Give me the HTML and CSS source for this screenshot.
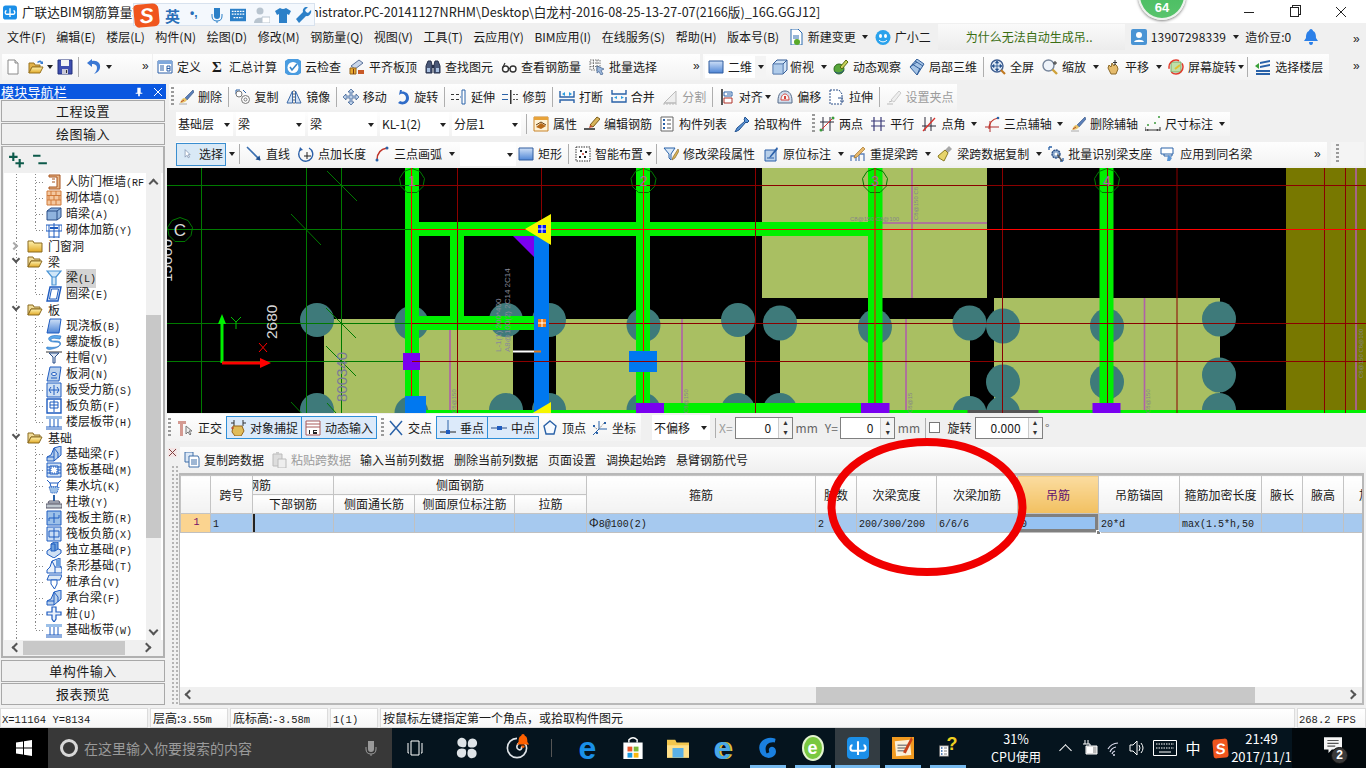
FILE: index.html
```html
<!DOCTYPE html>
<html lang="zh">
<head>
<meta charset="utf-8">
<title>广联达BIM钢筋算量</title>
<link rel="stylesheet" href="styles.css">
</head>
<body>
<svg class="defs" aria-hidden="true">
<defs>
<linearGradient id="gb" x1="0" y1="0" x2="0" y2="1"><stop offset="0" stop-color="#cfe0f7"/><stop offset="1" stop-color="#4f86d6"/></linearGradient>
<linearGradient id="gy" x1="0" y1="0" x2="0" y2="1"><stop offset="0" stop-color="#fff3b0"/><stop offset="1" stop-color="#e0a826"/></linearGradient>
<path id="axc" d="M0-12.500 8-9.500 12.500-2.500 11 5.500 5 11.500-5 11.500-11 5.500-12.500-2.500-8-9.500z"/>
<symbol id="new" viewBox="0 0 16 16"><path d="M3 1h7l3 3v11H3z" fill="#fff" stroke="#8a8a8a"/><path d="M10 1v3h3" fill="#ddd" stroke="#8a8a8a"/></symbol>
<symbol id="open" viewBox="0 0 16 16"><path d="M1 4h5l1 2h5v2H4L1 14z" fill="#e3b34a" stroke="#9a7420"/><path d="M4 8h11l-3 6H1z" fill="url(#gy)" stroke="#9a7420"/><path d="M9 3c2-2 4-2 5 0l1-1v3h-3l1-1c-1-1-2-1-3 0z" fill="#3a7dd0"/></symbol>
<symbol id="save" viewBox="0 0 16 16"><path d="M1 1h14v14H1z" fill="#3f4fb0" stroke="#23307a"/><path d="M4 1h8v6H4z" fill="#f4f4f4"/><path d="M5 10h6v5H5z" fill="#c9c9d8"/><path d="M9 11h1v3H9z" fill="#333"/></symbol>
<symbol id="undo" viewBox="0 0 16 16"><path d="M5 2c5-1 9 2 8 7-.5 3-3 5-6 6 2-2 3-4 3-6 0-3-2-4-5-4v3L0 4l5-4z" fill="#3b78d4"/></symbol>
<symbol id="def" viewBox="0 0 16 16"><path d="M1 2h14v12H1z" fill="#fff" stroke="#2a5fa8"/><path d="M1 2h14v3H1z" fill="#7fa8dc"/><path d="M3 7h4M3 9h4M3 11h4M10 7h3v5h-3zM10 9.500h3" fill="none" stroke="#2a5fa8"/></symbol>
<symbol id="cloud" viewBox="0 0 16 16"><path d="M0 2l3-2h10l3 2v12l-3 2H3l-3-2z" fill="#4a9ce0"/><circle cx="8" cy="8.500" r="5.500" fill="#fff"/><path d="M5 8l2 3 5-6" fill="none" stroke="#3a86c8" stroke-width="1.600"/></symbol>
<symbol id="flat" viewBox="0 0 16 16"><path d="M2 7l8-6 4 3-8 6z" fill="#c9d6ea" stroke="#5b7299"/><path d="M1 9h6v6H1z" fill="#e8a830" stroke="#96641a"/><path d="M9 11h6v4H9z" fill="#c85a28"/><path d="M4 10h1v5H4z" fill="#7a3a10"/></symbol>
<symbol id="find" viewBox="0 0 16 16"><path d="M3 2h3l1 4v8H1V7zM10 2h3l2 5v7H9V6z" fill="#4a5878" stroke="#27304a"/><path d="M7 6h2v3H7z" fill="#27304a"/><path d="M2 9h3v4H2zM11 9h3v4h-3z" fill="#a9c0e0"/></symbol>
<symbol id="glass" viewBox="0 0 16 16"><circle cx="4.500" cy="10" r="3" fill="#fff" stroke="#333" stroke-width="1.400"/><circle cx="12" cy="10" r="3" fill="#fff" stroke="#333" stroke-width="1.400"/><path d="M7.500 9.500h1.500M1.500 9L4 4" stroke="#333" stroke-width="1.200" fill="none"/></symbol>
<symbol id="batch" viewBox="0 0 16 16"><path d="M1 1h10v10H1zM1 4h10M1 7.500h10M4.500 1v10M8 1v10" fill="none" stroke="#777" stroke-dasharray="1.500 1"/><path d="M8 7l7 3-3 1.500L14 15l-2 1-2-3.500L8 14z" fill="#9db8dc" stroke="#44618c" stroke-width=".7"/></symbol>
<symbol id="plane" viewBox="0 0 16 16"><path d="M1 2h14v12H1z" fill="url(#gb)" stroke="#305c9e"/></symbol>
<symbol id="box3" viewBox="0 0 16 16"><path d="M1 5l4-4h10v10l-4 4H1z" fill="#cfe2f6" stroke="#345d96"/><path d="M1 5h10v10M11 5l4-4" fill="none" stroke="#345d96"/><path d="M1 5h10v10H1z" fill="#8fb3de" fill-opacity=".5"/></symbol>
<symbol id="orbit" viewBox="0 0 16 16"><circle cx="6" cy="10" r="5" fill="#58a63a" stroke="#2c6a1c"/><path d="M7 8l6-7 2 2-6 7z" fill="#c8d25a" stroke="#586a10"/><path d="M2 13c3 2 7 1 9-2" fill="none" stroke="#244f80"/></symbol>
<symbol id="local3" viewBox="0 0 16 16"><path d="M8 0l7 5-7 11-7-8z" fill="#a6c4e6" stroke="#335f9a"/><path d="M3 5l8 5M6 2l8 5M1 8l7-5M8 16l3-7" stroke="#335f9a" fill="none"/></symbol>
<symbol id="full" viewBox="0 0 16 16"><circle cx="7" cy="7" r="6" fill="#dfe9f6" stroke="#3f5e90" stroke-width="1.400"/><path d="M7 3v8M3 7h8M7 2l-1.500 2h3zM7 12l-1.500-2h3zM2 7l2-1.500v3zM12 7l-2-1.500v3z" stroke="#23508e" fill="#23508e" stroke-width=".8"/><path d="M11 11l4 4" stroke="#c07820" stroke-width="2.200"/></symbol>
<symbol id="zoom" viewBox="0 0 16 16"><circle cx="6.500" cy="6.500" r="5.500" fill="#eef3fa" stroke="#77869c" stroke-width="1.400"/><path d="M10.500 10.500l4.500 4.500" stroke="#cfa23a" stroke-width="2.400"/><path d="M13 2v4M11 4h4" stroke="#333"/></symbol>
<symbol id="pan" viewBox="0 0 16 16"><path d="M3 9l1-3 2 2 1-4 2 3 1-2 2 2 1 3-2 5H6z" fill="#e5bb6c" stroke="#8c6a2a"/><path d="M10 1v5M8 3.500h4" stroke="#333"/></symbol>
<symbol id="scrrot" viewBox="0 0 16 16"><path d="M3 3h10v10H3z" fill="#bfe0a8" stroke="#7aa868"/><path d="M7 10l5-4" stroke="#e0c030" stroke-width="2"/><circle cx="8" cy="8" r="7" fill="none" stroke="#e23a2a" stroke-width="1.500" stroke-dasharray="16 4"/></symbol>
<symbol id="floor" viewBox="0 0 16 16"><path d="M5 3l10-2v2L5 5zM5 7l10-2v2L5 9zM1 11h14v2H1z" fill="#2a62a8"/><path d="M1 14h14v2H1z" fill="#2a62a8"/><path d="M0 7l4-3v6z" fill="#3aa038"/></symbol>
<symbol id="brush" viewBox="0 0 16 16"><path d="M15 1L7 9l2 2 7-8z" fill="#5b7fb8" stroke="#2f4f80" stroke-width=".6"/><path d="M7 9c-3 0-4 2-5 5 3 0 6-1 7-3z" fill="#e8c568"/><path d="M1 15h8" stroke="#aaa"/><path d="M3 13l3-2" stroke="#b84a2a"/></symbol>
<symbol id="copy" viewBox="0 0 16 16"><path d="M1 1h4M1 1v4M8 1l3 3" stroke="#2a62a8" fill="none"/><circle cx="4" cy="5" r="3" fill="#fff" stroke="#777"/><circle cx="10.500" cy="10.500" r="4" fill="#fff" stroke="#777"/><circle cx="10.500" cy="10.500" r="1.500" fill="none" stroke="#777"/></symbol>
<symbol id="mirror" viewBox="0 0 16 16"><path d="M6.500 2v12H1zM9.500 2v12H15z" fill="#d4e3f5" stroke="#3a68a6"/><path d="M8 1v14" stroke="#666" stroke-dasharray="2 1"/></symbol>
<symbol id="move" viewBox="0 0 16 16"><path d="M8 0l3 3H9v4h4V5l3 3-3 3V9H9v4h2l-3 3-3-3h2V9H3v2L0 8l3-3v2h4V3H5z" fill="#b9cde6" stroke="#30588e" stroke-width=".7"/></symbol>
<symbol id="rot" viewBox="0 0 16 16"><path d="M6 1l-1 5 1.500-1C9.500 4 12 6 12 9s-3 5-6 3l-2 2c4 3 11 1 11-5 0-5-4-7-7.500-6.500L8 1z" fill="#2f6cc8"/></symbol>
<symbol id="extend" viewBox="0 0 16 16"><path d="M0 5h3v1H0zM0 10h3v1H0zM5 5h3v1H5zM5 10h3v1H5z" fill="#333"/><path d="M11 1h3v14h-3z" fill="#fff" stroke="#2a62a8"/><path d="M9 8h1" stroke="#2a62a8"/></symbol>
<symbol id="trim" viewBox="0 0 16 16"><path d="M8 1h1.500v14H8z" fill="#333"/><path d="M0 5h6v1H0zM0 10h6v1H0z" fill="#2a62a8"/><path d="M11 5h2v1h-2zM14 5h2v1h-2zM11 10h2v1h-2zM14 10h2v1h-2z" fill="#555"/></symbol>
<symbol id="break" viewBox="0 0 16 16"><path d="M1 2v6h14V2M1 14v-3h14v3" fill="none" stroke="#2a62a8" stroke-width="1.400"/><path d="M3 5l3-2v4zM13 5l-3-2v4z" fill="#2a9ce0"/></symbol>
<symbol id="merge" viewBox="0 0 16 16"><path d="M1 8V13h14V8M1 1v4h14V1" fill="none" stroke="#2a62a8" stroke-width="1.400"/><path d="M6 10l-3-1.500 3-1.500zM10 10l3-1.500L10 7z" fill="#2a9ce0"/></symbol>
<symbol id="splitg" viewBox="0 0 16 16"><path d="M2 14L14 2v12zM2 14h12" fill="#eee" stroke="#bbb"/><path d="M1 15h14" stroke="#bbb" stroke-dasharray="2 1"/></symbol>
<symbol id="align" viewBox="0 0 16 16"><path d="M3 0v16" stroke="#222" stroke-width="1.500"/><path d="M5 3h8v4H5z" fill="#fff" stroke="#2a62a8"/><path d="M5 9h8v5H5z" fill="#fff" stroke="#b0332a"/><path d="M12 5l-4 0" stroke="#2a62a8"/></symbol>
<symbol id="offset" viewBox="0 0 16 16"><path d="M1 12C1 5 4 2 8 2s7 3 7 10v2H1z" fill="#cfdcec" stroke="#556a88"/><path d="M4 11c0-4 2-6 4-6s4 2 4 6z" fill="#f5f5f5" stroke="#d8423a"/><path d="M8 7v3" stroke="#d8423a" stroke-width="2"/></symbol>
<symbol id="stretch" viewBox="0 0 16 16"><path d="M1 1h9l3 4v10H1z" fill="#fff" stroke="#2a4f88" stroke-dasharray="2 1"/><path d="M9 9h5M11 12h4" stroke="#2a4f88"/></symbol>
<symbol id="gripg" viewBox="0 0 16 16"><path d="M5 11l8-9 2 2-7 9z" fill="#eee" stroke="#ccc"/><path d="M1 15h6M3 13l3-1" stroke="#bbb"/></symbol>
<symbol id="attr" viewBox="0 0 16 16"><path d="M1 1h14v14H1z" fill="#fff3d8" stroke="#c8842a"/><path d="M1 1h14v3H1z" fill="#e8a33a"/><path d="M3 11l5-4 5 3-5 3z" fill="#b86a1a"/><path d="M3 9l5-3 5 3" fill="none" stroke="#6a4010"/></symbol>
<symbol id="editbar" viewBox="0 0 16 16"><path d="M13 1l3 2-7 8-3-2z" fill="#d8b45a" stroke="#7a5a18"/><path d="M6 9l3 2-4 1z" fill="#c84a2a"/><path d="M0 13h11" stroke="#222" stroke-width="1.500"/></symbol>
<symbol id="list" viewBox="0 0 16 16"><path d="M2 1h12v14H2z" fill="#fff" stroke="#666"/><path d="M4 4h2M4 8h2M4 12h2" stroke="#2a62a8" stroke-width="2"/><path d="M8 4h4M8 8h4M8 12h4" stroke="#555"/></symbol>
<symbol id="pick" viewBox="0 0 16 16"><path d="M11 1l4 4-2 2-1-1-7 8-4 2 2-4 8-7-1-1z" fill="#5b95d6" stroke="#1f4f8e"/></symbol>
<symbol id="twop" viewBox="0 0 16 16"><path d="M4 1v14M11 1v14M1 6h14" stroke="#2a2a3a" fill="none"/><path d="M2 14L14 2" stroke="#d8302a"/><circle cx="14" cy="2" r="1.500" fill="#3a9a3a"/><circle cx="2" cy="14" r="1.500" fill="#3a9a3a"/></symbol>
<symbol id="para" viewBox="0 0 16 16"><path d="M4 1v14M11 1v14M1 5h14M1 10h14" stroke="#3a3a78" fill="none" stroke-width="1.200"/></symbol>
<symbol id="ang" viewBox="0 0 16 16"><path d="M4 1v14M10 1v14M1 10h14" stroke="#2a2a3a" fill="none"/><path d="M2 15L14 2" stroke="#d8302a" stroke-width="1.300"/></symbol>
<symbol id="arc3" viewBox="0 0 16 16"><path d="M1 11h14M6 5v11" stroke="#b02a2a"/><path d="M5 13C5 6 9 3 14 2" fill="none" stroke="#c0352a" stroke-width="1.200"/><circle cx="14" cy="2" r="1.300" fill="#2a62a8"/></symbol>
<symbol id="dim" viewBox="0 0 16 16"><path d="M0 11v4M15 11v4M0 14h15" stroke="#333"/><circle cx="3" cy="9" r="1" fill="#3a9a3a"/><circle cx="10" cy="7" r="1" fill="#3a9a3a"/><circle cx="14" cy="1" r="1" fill="#3a9a3a"/><path d="M4 14l-2-1v2zM11 14l2-1v2z" fill="#333"/></symbol>
<symbol id="cursor" viewBox="0 0 16 16"><path d="M5 1v12l3-3 2 4 2-1-2-4h3z" fill="#fff" stroke="#6a7ea0"/></symbol>
<symbol id="line" viewBox="0 0 16 16"><path d="M1 1l13 13" stroke="#3a6fb0" stroke-width="1.600"/><path d="M14.500 14.500l-5-1 4-4z" fill="#1f4f8e"/></symbol>
<symbol id="plen" viewBox="0 0 16 16"><path d="M3 3a7 7 0 1 0 8-1" fill="none" stroke="#2a5fa8" stroke-width="1.400"/><path d="M2 1l3 3-4 1z" fill="#2a5fa8"/><path d="M9 6v7M6 10h7" stroke="#222"/></symbol>
<symbol id="arc" viewBox="0 0 16 16"><path d="M3 14C3 7 7 3 13 2" fill="none" stroke="#c0352a" stroke-width="1.500"/><circle cx="3" cy="14" r="1.500" fill="#2a62a8"/><circle cx="13" cy="2" r="1.500" fill="#2a62a8"/></symbol>
<symbol id="smart" viewBox="0 0 16 16"><path d="M1 1h14v14H1z" fill="#fff" stroke="#333" stroke-dasharray="1.500 1"/><path d="M5 4h2v2H5zM10 5h2v2h-2zM4 10h2v2H4zM9 10h2v2H9z" fill="#222"/><path d="M8 7v2M7 8h2" stroke="#c83a2a"/></symbol>
<symbol id="funnel" viewBox="0 0 16 16"><path d="M1 2h11L8 8v6l-2-2V8z" fill="#d8e8f8" stroke="#2a62a8"/><path d="M15 3l-5 8-1 3 3-2 4-7z" fill="#d8b45a" stroke="#7a5a18" stroke-width=".6"/></symbol>
<symbol id="inpos" viewBox="0 0 16 16"><path d="M2 4h11v11H2z" fill="#b8cfe9" stroke="#2a5fa8"/><path d="M14 1l1 2-7 8-2 1 1-2z" fill="#2a5fa8"/><path d="M4 12h7" stroke="#2a5fa8"/></symbol>
<symbol id="relift" viewBox="0 0 16 16"><path d="M1 15V10h5v5M9 15V8h5v7" fill="none" stroke="#5b7fb8" stroke-width="1.300"/><path d="M13 1l2 2-8 8-3 1 1-3z" fill="#e8b86a" stroke="#96641a" stroke-width=".6"/></symbol>
<symbol id="broom" viewBox="0 0 16 16"><path d="M12 0l3 3-4 4-3-3z" fill="#a8a8a8"/><path d="M8 4l3 3-4 8-5-3-1-2z" fill="#e6d36a" stroke="#8a7a20"/></symbol>
<symbol id="gear" viewBox="0 0 16 16"><path d="M1 1h3M1 1v3M15 15h-3M15 15v-3" stroke="#2a62a8" stroke-width="1.300"/><circle cx="8" cy="8" r="4" fill="#8aa8cc" stroke="#2a4f88" stroke-width="1.400" stroke-dasharray="2 .6"/><path d="M9 8l5 7" stroke="#555" stroke-width="1.500"/><circle cx="8" cy="8" r="1.500" fill="#fff"/></symbol>
<symbol id="apply" viewBox="0 0 16 16"><path d="M1 2h12v6H1z" fill="#fff" stroke="#2a62a8"/><path d="M4 8v2h8v-2" fill="none" stroke="#2a62a8"/><path d="M8 9l-1 6h3l2-3z" fill="#5b95d6"/></symbol>
<symbol id="ortho" viewBox="0 0 16 16"><path d="M0 1h8v3H5v12H2V4H0z" fill="#d49a92"/><path d="M8 6v8l2-2 2 3 1-1-2-3h3z" fill="#eee" stroke="#777"/></symbol>
<symbol id="osnap" viewBox="0 0 16 16"><path d="M4 0v6M13 0v6M1 3h3M13 3h3" stroke="#333"/><path d="M3 6l9 0 2 5-3 5H5l-3-4z" fill="#e0bc5a" stroke="#96641a"/><path d="M1 8h3" stroke="#c03a2a"/></symbol>
<symbol id="dyn" viewBox="0 0 16 16"><path d="M1 1h14v14H1z" fill="#fff" stroke="#a85a5a"/><path d="M1 4h14M1 7h14" stroke="#a85a5a"/><path d="M4 10h1v4H4zM8 10h4v1H9v1h3v2H8z" fill="#222"/></symbol>
<symbol id="xp" viewBox="0 0 16 16"><path d="M2 1l12 14M14 1L2 15" stroke="#2a62a8" stroke-width="1.500"/></symbol>
<symbol id="perp" viewBox="0 0 16 16"><path d="M0 12h16" stroke="#222"/><path d="M8 0v12" stroke="#2a62a8"/><path d="M6 10h4v4H6z" fill="#1f5cc0"/></symbol>
<symbol id="midp" viewBox="0 0 16 16"><path d="M0 8h16" stroke="#2a4f88"/><path d="M6 6h5v4H6z" fill="#1f5cc0"/></symbol>
<symbol id="vert" viewBox="0 0 16 16"><path d="M8 1l6 5-2 8H4L2 6z" fill="#f6faff" stroke="#2a62a8" stroke-width="1.400"/></symbol>
<symbol id="coord" viewBox="0 0 16 16"><path d="M1 15l6-6 0-8M7 9l8 0" stroke="#2a62a8" fill="none"/><path d="M1 6l4 3M12 3l-5 6" stroke="#777" stroke-dasharray="1 1"/><path d="M1 5h2v2H1zM12 2h2v2h-2zM4 12h2v2H4z" fill="#2a62a8"/></symbol>
<symbol id="docs" viewBox="0 0 16 16"><path d="M1 0h8v10H1z" fill="#dce8f6" stroke="#3f6ea8"/><path d="M5 4h9l1 2v9H5z" fill="#fff" stroke="#3f6ea8"/><path d="M7 8h6M7 10h6M7 12h6" stroke="#3f6ea8"/></symbol>
<symbol id="paste" viewBox="0 0 16 16"><path d="M2 2h9v12H2z" fill="#ddd" stroke="#bbb"/><path d="M5 0h3v3H5z" fill="#ccc"/><path d="M7 7h8v9H7z" fill="#eee" stroke="#bbb"/></symbol>
<symbol id="newdoc" viewBox="0 0 16 16"><path d="M3 0h7l4 4v12H3z" fill="#fff" stroke="#2a6ab0"/><path d="M5 7h6M5 9h6" stroke="#2a6ab0"/><circle cx="9" cy="13" r="3" fill="#5aaa2a"/></symbol>
<symbol id="face" viewBox="0 0 16 16"><ellipse cx="8" cy="8.500" rx="7.500" ry="7.500" fill="#2aa2ec"/><ellipse cx="5.500" cy="7" rx="1.500" ry="2" fill="#fff"/><ellipse cx="10.500" cy="7" rx="1.500" ry="2" fill="#fff"/><path d="M4 11c2 2.500 6 2.500 8 0" fill="none" stroke="#fff"/></symbol>
<symbol id="user" viewBox="0 0 16 16"><path d="M2 0h12q2 0 2 2v12q0 2-2 2H2q-2 0-2-2V2q0-2 2-2z" fill="#4a94d4"/><circle cx="8" cy="6" r="3" fill="#fff"/><path d="M3 13c1-3 9-3 10 0z" fill="#fff"/></symbol>
<symbol id="bell" viewBox="0 0 16 16"><path d="M8 0c1 0 2 1 2 2 3 1 3 5 3 7l2 3H1l2-3c0-2 0-6 3-7 0-1 1-2 2-2z" fill="#2c80e8"/><path d="M6 13h4q0 3-2 3t-2-3z" fill="#2c80e8"/></symbol>
<symbol id="app" viewBox="0 0 16 16"><path d="M3 0h10q3 0 3 3v10q0 3-3 3H3q-3 0-3-3V3q0-3 3-3z" fill="#1b8fe8"/><path d="M8 3v10M4 6c-2 0-2 4 0 4h8c2 0 2-4 0-4" fill="none" stroke="#fff" stroke-width="1.500"/></symbol>
<symbol id="mic" viewBox="0 0 16 16"><path d="M5 1h6v8q0 3-3 3t-3-3z" fill="currentColor"/><path d="M3 7v2q0 5 5 5t5-5V7M8 14v2" fill="none" stroke="currentColor"/></symbol>
<symbol id="kbd" viewBox="0 0 18 16"><path d="M0 1h18v14H0z" fill="currentColor"/><path d="M2 4h14M2 7h14M4 11h10" stroke="#fff" stroke-width="1.500" stroke-dasharray="2 1"/></symbol>
<symbol id="person" viewBox="0 0 16 16"><circle cx="6" cy="4" r="3.500" fill="#b8c4cf"/><path d="M0 16c0-7 12-7 12 0z" fill="#b8c4cf"/><path d="M8 10h8v6H8z" fill="#fff" stroke="#b8c4cf"/></symbol>
<symbol id="shirt" viewBox="0 0 16 16"><path d="M5 1L0 4l2 4 2-1v9h8V7l2 1 2-4-5-3q-3 2-6 0z" fill="#2c80c8"/></symbol>
<symbol id="wrench" viewBox="0 0 16 16"><path d="M15 3l-3 3-2-1-1-2 3-3c-3-1-6 2-5 5L0 12l3 4 7-7c3 1 6-3 5-6z" fill="#2c80c8"/></symbol>
<symbol id="door" viewBox="0 0 16 16"><path d="M3 1h11v14H3v-2h8V3H3z" fill="#e8b88a" stroke="#a8541e"/><path d="M6 5h3M6 8h3" stroke="#a8541e"/></symbol>
<symbol id="brick" viewBox="0 0 16 16"><path d="M1 1h14v14H1z" fill="#f4c8a0" stroke="#d07a3a"/><path d="M1 5.500h14M1 10h14M5 1v4.500M10 1v4.500M3 5.500V10M8 5.500V10M13 5.500V10M5 10v5M10 10v5" stroke="#d07a3a" fill="none"/></symbol>
<symbol id="hbeam" viewBox="0 0 16 16"><path d="M1 5l4-3h10v9l-4 3H1z" fill="#8fb3de" stroke="#2a4f88"/><path d="M1 5h10v9M11 5l4-3" fill="none" stroke="#2a4f88"/></symbol>
<symbol id="wallr" viewBox="0 0 16 16"><path d="M0 3h16v6H0z" fill="#fff" stroke="#1f5cc0"/><path d="M3 3v13M8 1v15M13 3v13M3 15h10" stroke="#1f5cc0" fill="none"/><path d="M4 6h8" stroke="#1f5cc0" stroke-width="2"/></symbol>
<symbol id="fold" viewBox="0 0 16 16"><path d="M1 3h5l1 2h8v9H1z" fill="url(#gy)" stroke="#8a6a20"/></symbol>
<symbol id="folo" viewBox="0 0 16 16"><path d="M1 3h5l1 2h6v2H4l-3 6z" fill="#f1dc98" stroke="#8a6a20"/><path d="M4 7h11l-3 6H1z" fill="url(#gy)" stroke="#8a6a20"/></symbol>
<symbol id="beam" viewBox="0 0 16 16"><path d="M1 1h14l-5 6v8H6V7z" fill="#cfe6f8" stroke="#4a94d4" stroke-width="1.200"/><path d="M6 7h4" stroke="#4a94d4"/></symbol>
<symbol id="ring" viewBox="0 0 16 16"><path d="M4 1h11l-3 14H1z" fill="#dce8f6" stroke="#1f5cc0" stroke-width="1.400"/><path d="M5.500 3h7l-2 10H3.500z" fill="#fff" stroke="#1f5cc0"/></symbol>
<symbol id="slab" viewBox="0 0 16 16"><path d="M4 1h11l-2 14H1z" fill="url(#gb)" stroke="#1f5cc0"/></symbol>
<symbol id="spiral" viewBox="0 0 16 16"><path d="M15 2C5 0 0 4 4 7c3 2 10 0 10 3s-6 4-13 3c-2 2 2 3 5 2 6-1 10-4 8-7-2-2-9 0-9-2s3-2 9-1z" fill="#5ba8ea" stroke="#1f6cc0" stroke-width=".6"/></symbol>
<symbol id="cap" viewBox="0 0 16 16"><path d="M0 1h16v2H0z" fill="#999"/><path d="M3 3h10L9 7v6H7V7z" fill="#dde6f2" stroke="#2a4f88"/></symbol>
<symbol id="hole" viewBox="0 0 16 16"><path d="M4 1h11l-2 14H1z" fill="#b9d0ec" stroke="#1f5cc0"/><ellipse cx="8" cy="8" rx="2.500" ry="1.500" fill="#fff" stroke="#1f5cc0"/><path d="M5 12h6" stroke="#1f5cc0"/></symbol>
<symbol id="force" viewBox="0 0 16 16"><path d="M1 1h14v14H1z" fill="#cfe0f4" stroke="#1f5cc0"/><path d="M8 3v10M3 8h10M5 5l-2 3 2 3M11 5l2 3-2 3" fill="none" stroke="#1f5cc0"/></symbol>
<symbol id="negs" viewBox="0 0 16 16"><path d="M1 1h14v14H1z" fill="#fff" stroke="#1f5cc0" stroke-width="1.400"/><path d="M4 4h8v6H4zM8 2v12M4 7h8" fill="none" stroke="#1f5cc0"/></symbol>
<symbol id="band" viewBox="0 0 16 16"><path d="M0 2h16v3H0z" fill="#9cc0e8"/><path d="M0 13h16M0 15h16M4 5v8M8 5v8M12 5v8" stroke="#1f5cc0"/></symbol>
<symbol id="fbeam" viewBox="0 0 16 16"><path d="M1 15V11l4-2 3-7 7-2v9l-7 6z" fill="#b9d0ec" stroke="#1f5cc0"/><path d="M8 2v13M1 11h7M8 2l4 5v5" fill="none" stroke="#1f5cc0"/></symbol>
<symbol id="raft" viewBox="0 0 16 16"><path d="M1 1h14v14H1zM4 4h8v8H4z" fill="#cfe0f4" stroke="#1f5cc0"/><path d="M5 5h6v6H5z" fill="#fff" stroke="#1f5cc0" stroke-dasharray="1 1"/><path d="M1 5h3M1 8h3M1 11h3M12 5h3M12 8h3M12 11h3" stroke="#1f5cc0"/></symbol>
<symbol id="pit" viewBox="0 0 16 16"><path d="M1 2l3 3h8l3-3M4 5l1 4h6l1-4" fill="none" stroke="#1f5cc0"/><path d="M3 9h10l-2 6H5z" fill="#9cc0e8" stroke-dasharray="1 1" stroke="#1f5cc0"/></symbol>
<symbol id="pier" viewBox="0 0 16 16"><path d="M7 1h2v6H7z" fill="#2a62a8"/><path d="M3 7h10l1 2H2z" fill="#dce4ee" stroke="#556"/><path d="M0 10h16v4H0z" fill="#c0c8d0" stroke="#556"/></symbol>
<symbol id="rmain" viewBox="0 0 16 16"><path d="M1 1h14v14H1z" fill="#9cc0e8" stroke="#1f5cc0"/><path d="M8 3v10M3 8h10M3 8v3M13 8v-3" fill="none" stroke="#1f5cc0"/></symbol>
<symbol id="rneg" viewBox="0 0 16 16"><path d="M1 1h14v14H1z" fill="#c8dcf4" stroke="#1f5cc0"/><path d="M3 5h10v6H3zM8 2v12" fill="none" stroke="#1f5cc0"/></symbol>
<symbol id="iso" viewBox="0 0 16 16"><path d="M1 9l6-4 8 3v3l-7 5-7-4z" fill="#cfe0f4" stroke="#1f5cc0"/><path d="M5 2l3-2h4v7l-3 2H5z" fill="#6d9fdc" stroke="#1f5cc0"/><path d="M9 2v7M5 2h4" stroke="#1f5cc0"/></symbol>
<symbol id="stripf" viewBox="0 0 16 16"><path d="M1 15v-3l3-3 2-6 8-3v8l2 3v4z" fill="#eaf1fa" stroke="#1f5cc0"/><path d="M6 3l3 6h7M9 9v6" fill="none" stroke="#1f5cc0"/><path d="M10 2l4-1v7h-4z" fill="#6d9fdc"/></symbol>
<symbol id="pilec" viewBox="0 0 16 16"><path d="M3 1h13l-2 5H1z" fill="#dce8f6" stroke="#1f5cc0"/><path d="M5 6h6v4L8.500 15 5 10z" fill="#fff" stroke="#1f5cc0"/></symbol>
<symbol id="pile" viewBox="0 0 16 16"><path d="M6 1h4v5h5v3h-5v4l-2 3-2-3V9H1V6h5z" fill="#eaf1fa" stroke="#1f5cc0" stroke-width="1.200"/></symbol>
<symbol id="view" viewBox="0 0 16 16"><path d="M4 1h8v14H4zM1 3v10h1M15 3v10h-1" fill="none" stroke="#fff"/></symbol>
<symbol id="fan" viewBox="0 0 16 16"><path d="M7 7C4 8 1 7 1 4s3-4 5-3 2 4 1 6zM9 7c-1-3 0-6 3-6s4 3 3 5-4 2-6 1zM9 9c3-1 6 0 6 3s-3 4-5 3-2-4-1-6zM7 9c1 3 0 6-3 6s-4-3-3-5 4-2 6-1z" fill="#dfe4e8"/></symbol>
<symbol id="swirl" viewBox="0 0 16 16"><path d="M8 1a7 7 0 1 0 7 7c0-3-3-5-5-4s-3 4-1 5 3-1 2-2" fill="none" stroke="#dfe4e8" stroke-width="1.200"/></symbol>
<symbol id="store" viewBox="0 0 16 16"><path d="M1 4h14v12H1z" fill="#fff"/><path d="M5 4V2q3-3 6 0v2" fill="none" stroke="#fff"/><path d="M4 7h3.500v3.500H4z" fill="#e8552a"/><path d="M8.500 7H12v3.500H8.500z" fill="#7ab838"/><path d="M4 11.500h3.500V15H4z" fill="#1a9ae0"/><path d="M8.500 11.500H12V15H8.500z" fill="#fbb810"/></symbol>
<symbol id="expl" viewBox="0 0 16 16"><path d="M0 2h6l1 2h9v11H0z" fill="#f2c64e"/><path d="M0 6h16v9H0z" fill="#ffe08a"/><path d="M4 8h8v7H4z" fill="#5ab0e6"/></symbol>
<symbol id="gicon" viewBox="0 0 16 16"><path d="M13 1C6-1 0 4 2 10c1 4 6 7 10 4 3-2 2-7-1-7-2 0-3 2-2 4l-2 1c-2-4 0-9 6-8 0-1 1-3 0-3z" fill="#1a80e0"/></symbol>
<symbol id="notes" viewBox="0 0 16 16"><path d="M0 0h16v16H0z" fill="#f09a20"/><path d="M2 3l11-1 1 11-11 1z" fill="#fbf0d8"/><path d="M4 6h7M4 8h6M4 10h6" stroke="#888"/><path d="M14 0L8 11l2 1 5-10z" fill="#c8421a"/></symbol>
<symbol id="plug" viewBox="0 0 16 16"><path d="M3 0v4M6 0v4M1 4h7v3H5v2" stroke="#fff" fill="none"/><path d="M4 6h11v8H4z" fill="#bbb" stroke="#fff"/><path d="M5 7h6v6H5z" fill="#fff"/></symbol>
<symbol id="wifi" viewBox="0 0 16 16"><path d="M1 9a12 12 0 0 1 10-6M3 12a8 8 0 0 1 6-5M5 14a4 4 0 0 1 3-3" fill="none" stroke="#dde" stroke-width="1.200"/><circle cx="7" cy="15" r="1" fill="#dde"/></symbol>
<symbol id="spk" viewBox="0 0 16 16"><path d="M1 5h3l4-4v14l-4-4H1z" fill="none" stroke="#fff"/><path d="M10 5q2 3 0 6M12 3q4 5 0 10" fill="none" stroke="#fff"/></symbol>
<symbol id="keys" viewBox="0 0 24 16"><path d="M.5.500h23v15H.5z" fill="none" stroke="#fff"/><path d="M3 4h18M3 8h18" stroke="#fff" stroke-dasharray="1.500 1"/><path d="M6 12h12" stroke="#fff"/></symbol>
<symbol id="msg" viewBox="0 0 16 16"><path d="M0 1h16v11H7l-3 3v-3H0z" fill="#f5f5f5"/><path d="M3 4h10M3 6.500h10M3 9h7" stroke="#555"/></symbol>
<symbol id="winl" viewBox="0 0 16 16"><path d="M0 2.500l7-1V7.500H0zM8 1.300L16 0v7.500H8zM0 8.500h7V14.500l-7-1zM8 8.500h8V16l-8-1.200z" fill="#fff"/></symbol>
</defs>
</svg>

<div class="app">
  <header class="titlebar">
    <svg class="ic title-logo"><use href="#app"/></svg>
    <span class="title-text">广联达BIM钢筋算量软件 GGJ2013 - [C:\Users\Administrator.PC-20141127NRHM\Desktop\白龙村-2016-08-25-13-27-07(2166版)_16G.GGJ12]</span>
    <div class="winctl">
      <span class="wc wc-min"></span>
      <span class="wc wc-max"></span>
      <svg class="wc-x" viewBox="0 0 12 12"><path d="M1 1l10 10M11 1L1 11" stroke="#222" fill="none"/></svg>
    </div>
  </header>

  <nav class="menubar">
    <span class="mi">文件(F)</span><span class="mi">编辑(E)</span><span class="mi">楼层(L)</span><span class="mi">构件(N)</span><span class="mi">绘图(D)</span><span class="mi">修改(M)</span><span class="mi">钢筋量(Q)</span><span class="mi">视图(V)</span><span class="mi">工具(T)</span><span class="mi">云应用(Y)</span><span class="mi">BIM应用(I)</span><span class="mi">在线服务(S)</span><span class="mi">帮助(H)</span><span class="mi">版本号(B)</span>
    <span class="t t-new"><svg class="ic"><use href="#newdoc"/></svg>新建变更</span><span class="arr"></span>
    <span class="t"><svg class="ic"><use href="#face"/></svg>广小二</span>
    <div class="ask">为什么无法自动生成吊..</div>
    <span class="t t-user"><svg class="ic"><use href="#user"/></svg><span class="phone">13907298339</span></span><span class="arr"></span>
    <span class="t">造价豆:0</span>
    <svg class="ic bell"><use href="#bell"/></svg>
    <span class="more more-end">»</span>
  </nav>

  <div class="tbar tb1">
    <div class="grp g-file">
      <svg class="ic ic-a"><use href="#new"/></svg>
      <svg class="ic ic-b"><use href="#open"/></svg><span class="arr"></span>
      <svg class="ic ic-c"><use href="#save"/></svg>
      <i class="sep sep-file"></i>
      <svg class="ic ic-a"><use href="#undo"/></svg><span class="arr"></span>
      <span class="more more-file">»</span>
    </div>
    <div class="grp g-main">
      <span class="t"><svg class="ic"><use href="#def"/></svg>定义</span>
      <span class="t"><b class="sigma">Σ</b>汇总计算</span>
      <span class="t"><svg class="ic"><use href="#cloud"/></svg>云检查</span>
      <span class="t"><svg class="ic"><use href="#flat"/></svg>平齐板顶</span>
      <span class="t"><svg class="ic"><use href="#find"/></svg>查找图元</span>
      <span class="t"><svg class="ic"><use href="#glass"/></svg>查看钢筋量</span>
      <span class="t"><svg class="ic"><use href="#batch"/></svg>批量选择</span>
      <span class="more more-main">»</span>
    </div>
    <div class="grp g-view">
      <span class="t t-on"><svg class="ic"><use href="#plane"/></svg>二维</span><span class="arr arr-box"></span>
      <span class="t"><svg class="ic ic-w"><use href="#box3"/></svg>俯视</span><span class="arr"></span>
      <span class="t"><svg class="ic"><use href="#orbit"/></svg>动态观察</span>
      <span class="t"><svg class="ic"><use href="#local3"/></svg>局部三维</span>
      <i class="sep"></i>
      <span class="t"><svg class="ic"><use href="#full"/></svg>全屏</span>
      <span class="t"><svg class="ic"><use href="#zoom"/></svg>缩放</span><span class="arr"></span>
      <span class="t"><svg class="ic"><use href="#pan"/></svg>平移</span><span class="arr"></span>
      <span class="t"><svg class="ic"><use href="#scrrot"/></svg>屏幕旋转</span><span class="arr arr-s"></span>
      <i class="sep sep-wide"></i>
      <span class="t"><svg class="ic"><use href="#floor"/></svg>选择楼层</span>
    </div>
    <span class="more more-end2">»</span>
  </div>

  <div class="work">
    <aside class="nav">
      <div class="nav-head"><span>模块导航栏</span><span class="nav-btns"><svg class="pin" viewBox="0 0 10 12"><path d="M3 1h4v6h2v1H6v3H4V8H1V7h2z" fill="#fff"/></svg><svg class="pin" viewBox="0 0 10 10"><path d="M1 1l8 8M9 1l-8 8" stroke="#fff" fill="none"/></svg></span></div>
      <div class="nav-btn">工程设置</div>
      <div class="nav-btn">绘图输入</div>
      <div class="nav-tree">
        <div class="tree-tools"><svg class="ic ic-plus" viewBox="0 0 16 16"><path d="M4 1h2v3h3v2H6v3H4V6H1V4h3zM10 7h2v3h3v2h-3v3h-2v-3H7v-2h3z" fill="#0c5a4a"/></svg><svg class="ic ic-plus" viewBox="0 0 16 16"><path d="M1 3h7v2H1zM6 10h8v2H6z" fill="#0c5a4a"/></svg></div>
        <div class="tree-view">
          <div class="tree">
            <div class="r leaf"><svg class="ic"><use href="#door"/></svg><span>人防门框墙<em>(RF</em></span></div>
            <div class="r leaf"><svg class="ic"><use href="#brick"/></svg><span>砌体墙<em>(Q)</em></span></div>
            <div class="r leaf"><svg class="ic"><use href="#hbeam"/></svg><span>暗梁<em>(A)</em></span></div>
            <div class="r leaf end"><svg class="ic"><use href="#wallr"/></svg><span>砌体加筋<em>(Y)</em></span></div>
            <div class="r fold"><i class="chev c-r"></i><svg class="ic"><use href="#fold"/></svg><span>门窗洞</span></div>
            <div class="r fold"><i class="chev c-d"></i><svg class="ic"><use href="#folo"/></svg><span>梁</span></div>
            <div class="r leaf sel"><svg class="ic"><use href="#beam"/></svg><span>梁<em>(L)</em></span></div>
            <div class="r leaf end"><svg class="ic"><use href="#ring"/></svg><span>圈梁<em>(E)</em></span></div>
            <div class="r fold"><i class="chev c-d"></i><svg class="ic"><use href="#folo"/></svg><span>板</span></div>
            <div class="r leaf"><svg class="ic"><use href="#slab"/></svg><span>现浇板<em>(B)</em></span></div>
            <div class="r leaf"><svg class="ic"><use href="#spiral"/></svg><span>螺旋板<em>(B)</em></span></div>
            <div class="r leaf"><svg class="ic"><use href="#cap"/></svg><span>柱帽<em>(V)</em></span></div>
            <div class="r leaf"><svg class="ic"><use href="#hole"/></svg><span>板洞<em>(N)</em></span></div>
            <div class="r leaf"><svg class="ic"><use href="#force"/></svg><span>板受力筋<em>(S)</em></span></div>
            <div class="r leaf"><svg class="ic"><use href="#negs"/></svg><span>板负筋<em>(F)</em></span></div>
            <div class="r leaf end"><svg class="ic"><use href="#band"/></svg><span>楼层板带<em>(H)</em></span></div>
            <div class="r fold"><i class="chev c-d"></i><svg class="ic"><use href="#folo"/></svg><span>基础</span></div>
            <div class="r leaf"><svg class="ic"><use href="#fbeam"/></svg><span>基础梁<em>(F)</em></span></div>
            <div class="r leaf"><svg class="ic"><use href="#raft"/></svg><span>筏板基础<em>(M)</em></span></div>
            <div class="r leaf"><svg class="ic"><use href="#pit"/></svg><span>集水坑<em>(K)</em></span></div>
            <div class="r leaf"><svg class="ic"><use href="#pier"/></svg><span>柱墩<em>(Y)</em></span></div>
            <div class="r leaf"><svg class="ic"><use href="#rmain"/></svg><span>筏板主筋<em>(R)</em></span></div>
            <div class="r leaf"><svg class="ic"><use href="#rneg"/></svg><span>筏板负筋<em>(X)</em></span></div>
            <div class="r leaf"><svg class="ic"><use href="#iso"/></svg><span>独立基础<em>(P)</em></span></div>
            <div class="r leaf"><svg class="ic"><use href="#stripf"/></svg><span>条形基础<em>(T)</em></span></div>
            <div class="r leaf"><svg class="ic"><use href="#pilec"/></svg><span>桩承台<em>(V)</em></span></div>
            <div class="r leaf"><svg class="ic"><use href="#fbeam"/></svg><span>承台梁<em>(F)</em></span></div>
            <div class="r leaf"><svg class="ic"><use href="#pile"/></svg><span>桩<em>(U)</em></span></div>
            <div class="r leaf end"><svg class="ic"><use href="#band"/></svg><span>基础板带<em>(W)</em></span></div>
            <div class="r fold"><i class="chev c-r"></i><svg class="ic"><use href="#fold"/></svg></div>
          </div>
          <div class="vsb"><i class="sb-up"></i><i class="sb-thumb"></i><i class="sb-dn"></i></div>
        </div>
        <div class="hsb"><i class="sb-l"></i><i class="hsb-thumb"></i><i class="sb-r"></i></div>
      </div>
      <div class="nav-btn nb-first">单构件输入</div>
      <div class="nav-btn">报表预览</div>
    </aside>

    <main class="main">
      <div class="tbar tb2">
        <div class="grp g-edit">
          <i class="grip"></i>
          <span class="t"><svg class="ic"><use href="#brush"/></svg>删除</span><i class="sep"></i>
          <span class="t"><svg class="ic"><use href="#copy"/></svg>复制</span>
          <span class="t"><svg class="ic"><use href="#mirror"/></svg>镜像</span><i class="sep"></i>
          <span class="t"><svg class="ic"><use href="#move"/></svg>移动</span>
          <span class="t"><svg class="ic"><use href="#rot"/></svg>旋转</span><i class="sep"></i>
          <span class="t"><svg class="ic"><use href="#extend"/></svg>延伸</span>
          <span class="t"><svg class="ic"><use href="#trim"/></svg>修剪</span><i class="sep"></i>
          <span class="t"><svg class="ic"><use href="#break"/></svg>打断</span>
          <span class="t"><svg class="ic"><use href="#merge"/></svg>合并</span>
          <span class="t off"><svg class="ic"><use href="#splitg"/></svg>分割</span><i class="sep"></i>
          <span class="t"><svg class="ic"><use href="#align"/></svg>对齐</span><span class="arr arr-s"></span>
          <span class="t"><svg class="ic"><use href="#offset"/></svg>偏移</span>
          <span class="t"><svg class="ic"><use href="#stretch"/></svg>拉伸</span><i class="sep"></i>
          <span class="t off"><svg class="ic"><use href="#gripg"/></svg>设置夹点</span>
        </div>
      </div>

      <div class="tbar tb3">
        <div class="grp g-sel">
          <div class="dd dd-s">基础层</div>
          <div class="dd">梁</div>
          <div class="dd">梁</div>
          <div class="dd">KL-1(2)</div>
          <div class="dd">分层1</div>
          <i class="sep"></i>
          <span class="t"><svg class="ic"><use href="#attr"/></svg>属性</span>
          <span class="t"><svg class="ic"><use href="#editbar"/></svg>编辑钢筋</span>
          <span class="t"><svg class="ic"><use href="#list"/></svg>构件列表</span>
          <span class="t"><svg class="ic"><use href="#pick"/></svg>拾取构件</span>
        </div>
        <div class="grp g-axis">
          <i class="grip"></i>
          <span class="t"><svg class="ic"><use href="#twop"/></svg>两点</span>
          <span class="t"><svg class="ic"><use href="#para"/></svg>平行</span>
          <span class="t"><svg class="ic"><use href="#ang"/></svg>点角</span><span class="arr"></span>
          <span class="t"><svg class="ic"><use href="#arc3"/></svg>三点辅轴</span><span class="arr"></span>
          <span class="t"><svg class="ic"><use href="#brush"/></svg>删除辅轴</span>
          <span class="t"><svg class="ic"><use href="#dim"/></svg>尺寸标注</span><span class="arr"></span>
        </div>
      </div>

      <div class="tbar tb4">
        <div class="grp g-draw">
          <span class="t t-pick"><svg class="ic"><use href="#cursor"/></svg>选择</span><span class="arr"></span><i class="sep"></i>
          <span class="t"><svg class="ic"><use href="#line"/></svg>直线</span>
          <span class="t"><svg class="ic"><use href="#plen"/></svg>点加长度</span>
          <span class="t"><svg class="ic"><use href="#arc"/></svg>三点画弧</span><span class="arr"></span>
          <div class="dd dd-e"></div>
          <span class="t"><svg class="ic"><use href="#plane"/></svg>矩形</span><i class="sep"></i>
          <span class="t"><svg class="ic"><use href="#smart"/></svg>智能布置</span><span class="arr arr-s"></span><i class="sep"></i>
          <span class="t"><svg class="ic"><use href="#funnel"/></svg>修改梁段属性</span>
          <span class="t"><svg class="ic"><use href="#inpos"/></svg>原位标注</span><span class="arr"></span>
          <span class="t"><svg class="ic"><use href="#relift"/></svg>重提梁跨</span><span class="arr"></span>
          <span class="t"><svg class="ic"><use href="#broom"/></svg>梁跨数据复制</span><span class="arr"></span>
          <span class="t"><svg class="ic"><use href="#gear"/></svg>批量识别梁支座</span>
          <span class="t"><svg class="ic"><use href="#apply"/></svg>应用到同名梁</span>
          <span class="more more-draw">»</span>
        </div>
        <div class="grp g-tail"><i class="grip"></i></div>
      </div>

      <svg class="cad" viewBox="167 168 1199 245" role="img" aria-label="CAD">
        <rect x="167" y="168" width="1199" height="245" fill="#000"/>
        <g fill="#a9bf62">
          <rect x="324" y="319" width="189" height="94"/><rect x="556" y="319" width="189" height="94"/>
          <rect x="762" y="168" width="225" height="130"/><rect x="780" y="319" width="190" height="94"/>
          <rect x="994" y="298" width="226" height="115"/>
        </g>
        <rect x="1286" y="168" width="80" height="245" fill="#787800"/>
        <g fill="#3e7a7a">
          <ellipse cx="317" cy="320" rx="17" ry="17"/><ellipse cx="411.500" cy="323" rx="17" ry="17"/><ellipse cx="506" cy="320" rx="17" ry="17"/><ellipse cx="549" cy="320" rx="17" ry="17"/><ellipse cx="643.500" cy="325" rx="17" ry="17"/><ellipse cx="738" cy="320" rx="17" ry="17"/>
          <ellipse cx="317" cy="410" rx="17" ry="17"/><ellipse cx="411.500" cy="413" rx="17" ry="17"/><ellipse cx="506" cy="410" rx="17" ry="17"/><ellipse cx="549" cy="410" rx="17" ry="17"/><ellipse cx="643.500" cy="410" rx="17" ry="17"/><ellipse cx="738" cy="410" rx="17" ry="17"/>
          <ellipse cx="780" cy="323" rx="17" ry="17.500"/><ellipse cx="875" cy="327" rx="17" ry="17.500"/><ellipse cx="969.500" cy="323" rx="17" ry="17.500"/><ellipse cx="1003" cy="326" rx="17" ry="17.500"/><ellipse cx="1107" cy="326" rx="17" ry="17.500"/><ellipse cx="1219" cy="319" rx="17" ry="17.500"/>
          <ellipse cx="1003" cy="382" rx="17" ry="17.500"/><ellipse cx="1107" cy="382" rx="17" ry="17.500"/><ellipse cx="1219" cy="375" rx="17" ry="17.500"/>
          <ellipse cx="780" cy="410" rx="17" ry="17"/><ellipse cx="969.500" cy="413" rx="17" ry="17"/><ellipse cx="1003" cy="413" rx="17" ry="17"/><ellipse cx="1219" cy="410" rx="17" ry="17"/>
        </g>
        <g stroke="#b060a8" fill="none" stroke-width="1.600">
          <path d="M450 319v94M682 319v94M912 168v130M762 223h225M906 319v94M1144.500 298v115M1356 168v245"/>
        </g>
        <g fill="#00f000">
          <rect x="405" y="168" width="14" height="245"/><rect x="636" y="168" width="14" height="245"/><rect x="868" y="168" width="14.500" height="245"/><rect x="1099.500" y="168" width="14" height="245"/>
          <rect x="405" y="222" width="477" height="14"/><rect x="450" y="236" width="14" height="94"/><rect x="405" y="316" width="129" height="14"/>
          <rect x="664" y="403" width="197" height="10"/><rect x="419" y="410" width="220" height="3"/><rect x="889" y="410" width="477" height="3"/>
        </g>
        <rect x="967.500" y="410" width="71" height="3" fill="#555"/>
        <g stroke="#007a00" fill="none">
          <path d="M201.500 168v245M306.500 168v245M341.500 168v245"/>
          <path d="M167 185.500h245M167 229.500h245M167 323.500h245M167 361.500h245"/>
          <path d="M327 171l30 30M291 214l30 31M326 308l30 30M326 346l30 30M291 402l17 18M327 403l9 10"/>
          <use href="#axc" x="412" y="181"/><use href="#axc" x="643.500" y="181"/><use href="#axc" x="875" y="181"/><use href="#axc" x="1107" y="181"/><use href="#axc" x="180" y="230"/>
        </g>
        <g stroke="#8b0000" fill="none">
          <path d="M412 185.500h954M412 323.500h954M412 361.500h954"/>
          <path d="M457.500 168v245M541.500 168v245M755.500 168v245M1002.500 168v245M1107.500 168v245M1177 168v245M1324.500 168v245M1345.500 168v245"/>
        </g>
        <g stroke="#f00" fill="none"><path d="M412 229.500h954M411.500 168v245M643.500 168v245M875 168v245"/></g>
        <g fill="#0078f0"><rect x="534" y="236" width="15" height="177"/><rect x="629" y="351" width="28" height="21"/><rect x="405" y="396" width="21" height="17"/></g>
        <g fill="#7a00f0"><path d="M513 236h21v21z"/><rect x="403" y="353" width="17" height="17"/><rect x="636" y="403" width="28" height="10"/><rect x="861" y="403" width="28.500" height="10"/><rect x="1092.500" y="403" width="28" height="10"/></g>
        <g stroke="#8b0000" fill="none"><path d="M412 361.500h250"/></g>
        <path d="M525 229l26-15v31zM532.500 413l18.500-11v11z" fill="#f6f600"/>
        <rect x="538" y="225" width="8" height="8" fill="#0018f0"/><path d="M542 225v8M538 229h8" stroke="#fff"/>
        <rect x="538" y="319" width="8" height="8" fill="#f07c18"/><path d="M542 319v8M538 323h8" stroke="#fff"/>
        <path d="M513 351.500h21" stroke="#fff" stroke-width="2"/><path d="M534 351.500h7" stroke="#e07818" stroke-width="2"/>
        <path d="M222 363v-43" stroke="#00f000" stroke-width="3"/><path d="M222 314l-4 10h8z" fill="#00f000"/>
        <path d="M222 363h40" stroke="#f00" stroke-width="3"/><path d="M271 363l-11-5v10z" fill="#f00"/>
        <path d="M231 317l5 5 5-5M236 322v7" stroke="#00c000" fill="none"/>
        <path d="M259 343l8 9M267 343l-8 9" stroke="#f00" fill="none"/>
        <text class="cad-t cad-a" transform="translate(277 339) rotate(-90)">2680</text>
        <text class="cad-t cad-b" transform="translate(347 402) rotate(-90)">800340</text>
        <text class="cad-t cad-a" transform="translate(172 282) rotate(-90)">15000</text>
        <text class="cad-t cad-c" x="180" y="236">C</text>
        <text class="cad-t cad-d" x="412" y="186">1</text><text class="cad-t cad-d" x="643.500" y="186">2</text><text class="cad-t cad-d" x="875" y="186">3</text><text class="cad-t cad-d" x="1107" y="186">4</text>
        <text class="cad-t cad-s" transform="translate(501 352) rotate(-90)">L-1(1) 200*400</text>
        <text class="cad-t cad-s" transform="translate(510 352) rotate(-90)">A8@100(2) 2C14 2C14</text>
        <text class="cad-t cad-m" transform="translate(456 413) rotate(-90)">C8@150</text>
        <text class="cad-t cad-m" transform="translate(688 413) rotate(-90)">C8@150</text>
        <text class="cad-t cad-m" transform="translate(918 220) rotate(-90)">C8@150 C8</text>
        <text class="cad-t cad-m" x="850" y="221">C8@150 C8@100</text>
        <text class="cad-t cad-m" transform="translate(912 413) rotate(-90)">C8@15</text>
        <text class="cad-t cad-m" transform="translate(1150 413) rotate(-90)">C8@150</text>
        <text class="cad-t cad-m" transform="translate(1363 378) rotate(-90)">C8@150 C8@100</text>
      </svg>

      <div class="tbar snap">
        <div class="grp g-snap">
          <i class="grip"></i>
          <span class="t"><svg class="ic"><use href="#ortho"/></svg>正交</span>
          <span class="t t-box"><svg class="ic"><use href="#osnap"/></svg>对象捕捉</span>
          <span class="t t-box"><svg class="ic"><use href="#dyn"/></svg>动态输入</span>
          <i class="grip grip-m"></i>
          <span class="t"><svg class="ic"><use href="#xp"/></svg>交点</span>
          <span class="t t-box"><svg class="ic"><use href="#perp"/></svg>垂点</span>
          <span class="t t-box"><svg class="ic"><use href="#midp"/></svg>中点</span>
          <span class="t"><svg class="ic"><use href="#vert"/></svg>顶点</span>
          <span class="t t-tight"><svg class="ic"><use href="#coord"/></svg>坐标</span>
        </div>
        <div class="grp g-off">
          <div class="dd dd-o">不偏移</div><i class="sep"></i>
          <span class="lab off">X=</span><div class="num">0</div><span class="lab lab-m">mm</span>
          <span class="lab">Y=</span><div class="num num-y">0</div><span class="lab">mm</span><i class="sep"></i>
          <i class="chk"></i><span class="lab lab-r">旋转</span><div class="num num-r">0.000</div><span class="lab">°</span>
        </div>
      </div>

      <section class="panel">
        <div class="pgrip"><svg class="pclose" viewBox="0 0 9 9"><path d="M0 0h9v9H0z" fill="#f4e6e6"/><path d="M1 1l7 7M8 1L1 8" stroke="#804040" fill="none"/></svg></div>
        <div class="pbody">
          <div class="ptools">
            <span class="t"><svg class="ic"><use href="#docs"/></svg>复制跨数据</span>
            <span class="t off"><svg class="ic"><use href="#paste"/></svg>粘贴跨数据</span>
            <span class="t">输入当前列数据</span>
            <span class="t">删除当前列数据</span>
            <span class="t">页面设置</span>
            <span class="t">调换起始跨</span>
            <span class="t">悬臂钢筋代号</span>
          </div>
          <div class="gridwrap">
            <div class="gridview">
            <table class="grid">
              <colgroup><col class="c0"><col class="c1"><col class="c2"><col class="c3"><col class="c4"><col class="c5"><col class="c6"><col class="c7"><col class="c8"><col class="c9"><col class="c10"><col class="c11"><col class="c12"><col class="c13"><col class="c14"><col class="c15"></colgroup>
              <thead>
                <tr><th rowspan="2"></th><th rowspan="2">跨号</th><th class="clip-l">钢筋</th><th colspan="3">侧面钢筋</th><th rowspan="2">箍筋</th><th rowspan="2">肢数</th><th rowspan="2">次梁宽度</th><th rowspan="2">次梁加筋</th><th rowspan="2" class="hot">吊筋</th><th rowspan="2">吊筋锚固</th><th rowspan="2">箍筋加密长度</th><th rowspan="2">腋长</th><th rowspan="2">腋高</th><th rowspan="2" class="clip-r">加腋</th></tr>
                <tr><th>下部钢筋</th><th>侧面通长筋</th><th>侧面原位标注筋</th><th>拉筋</th></tr>
              </thead>
              <tbody>
                <tr><td class="rowh">1</td><td><em>1</em></td><td class="mark"></td><td></td><td></td><td></td><td>Φ<em>8@100(2)</em></td><td><em>2</em></td><td><em>200/300/200</em></td><td><em>6/6/6</em></td><td class="cur"><em>0</em><i class="handle"></i></td><td><em>20*d</em></td><td><em>max(1.5*h,50</em></td><td></td><td></td><td></td></tr>
              </tbody>
            </table>
            </div>
            <div class="ghs"><i class="sb-l"></i><div class="ghs-track"><i class="ghs-thumb"></i></div><i class="sb-r"></i></div>
          </div>
        </div>
      </section>
    </main>
  </div>

  <footer class="status">
    <div class="st st-0"><em>X=11164 Y=8134</em></div>
    <div class="st st-1">层高:<em>3.55m</em></div>
    <div class="st st-2">底标高:<em>-3.58m</em></div>
    <div class="st st-3"><em>1(1)</em></div>
    <div class="st st-4">按鼠标左键指定第一个角点，或拾取构件图元</div>
    <div class="st st-5"><em>268.2 FPS</em></div>
  </footer>

  <div class="taskbar">
    <div class="tk-start"><svg class="ic"><use href="#winl"/></svg></div>
    <div class="tk-search"><i class="cortana"></i><span>在这里输入你要搜索的内容</span><svg class="ic tk-mic"><use href="#mic"/></svg></div>
    <div class="tk w46"><svg class="ic"><use href="#view"/></svg></div>
    <div class="tk w58"><svg class="tk-i"><use href="#fan"/></svg></div>
    <div class="tk w42"><svg class="tk-i"><use href="#swirl"/></svg><svg class="tk-bell"><use href="#bell"/></svg></div>
    <div class="tk w27"><i class="tk-sep"></i></div>
    <div class="tk"><span class="tk-e">e</span></div>
    <div class="tk"><svg class="tk-i"><use href="#store"/></svg></div>
    <div class="tk"><svg class="tk-i"><use href="#expl"/></svg></div>
    <div class="tk"><span class="tk-e tk-ie">e</span></div>
    <div class="tk on"><svg class="tk-i"><use href="#gicon"/></svg></div>
    <div class="tk on"><span class="tk-ge">e</span></div>
    <div class="tk on cur-t"><svg class="tk-i"><use href="#app"/></svg></div>
    <div class="tk on"><svg class="tk-i"><use href="#notes"/></svg></div>
    <div class="tk on"><span class="tk-q"><svg class="ic"><use href="#list"/></svg><b>?</b></span></div>
    <div class="cpu"><span>31%</span><span>CPU使用</span></div>
    <div class="tr w24 tr-first"><i class="caret"></i></div>
    <div class="tr w26"><svg class="ic"><use href="#plug"/></svg></div>
    <div class="tr w24"><svg class="ic"><use href="#wifi"/></svg></div>
    <div class="tr w20"><svg class="ic"><use href="#spk"/></svg></div>
    <div class="tr w36"><svg class="tr-k"><use href="#keys"/></svg></div>
    <div class="tr w20 zh">中</div>
    <div class="tr w34"><span class="sg sg-s">S</span></div>
    <div class="clock"><span>21:49</span><span>2017/11/1</span></div>
    <div class="notif"><svg class="tk-i"><use href="#msg"/></svg><b>2</b></div>
  </div>

  <div class="ime">
    <span class="sg">S</span>
    <span class="ime-en">英</span>
    <span class="ime-dot">•,</span>
    <svg class="ime-i"><use href="#mic"/></svg>
    <svg class="ime-i"><use href="#kbd"/></svg>
    <svg class="ime-i"><use href="#person"/></svg>
    <svg class="ime-i"><use href="#shirt"/></svg>
    <svg class="ime-i"><use href="#wrench"/></svg>
  </div>
  <div class="badge"><span>64</span></div>
  <svg class="ring" viewBox="0 0 210 148"><ellipse cx="105" cy="74" rx="95.500" ry="65" fill="none" stroke="#f00000" stroke-width="8"/></svg>
</div>
</body>
</html>
```
FILE: styles.css
```css
*{box-sizing:border-box;margin:0;padding:0}
html,body{width:1366px;height:768px;overflow:hidden}
body{font:12px/16px "Noto Sans CJK SC","Liberation Sans",sans-serif;color:#1a1a1a;background:#f0f0f0}
em{font:10px/16px "Liberation Mono",monospace;font-style:normal}
.defs{position:absolute;width:0;height:0}
.app{position:relative;width:1366px;height:768px;display:flex;flex-direction:column;overflow:hidden}
.ic{width:16px;height:16px;flex:none;display:block}

/* title */
.titlebar{height:23px;background:#fff;display:flex;align-items:center;padding-left:3px;flex:none}
.title-logo{width:14px;height:15px;margin-top:1px}
.title-text{margin-left:5px;font-size:12.600px;white-space:nowrap;color:#222;width:1090px;overflow:hidden;flex:none}
.winctl{margin-left:auto;width:128px;height:23px;position:relative;flex:none}
.wc{position:absolute;display:block}
.wc-min{left:6px;top:12px;width:10px;height:1px;background:#222}
.wc-max{left:52px;top:7px;width:9px;height:10px;border:1px solid #222;box-shadow:2px -2px 0 -1px #fff,2px -2px 0 0 #222}
.wc-x{position:absolute;left:97px;top:6px;width:12px;height:12px}

/* menu */
.menubar{height:28px;flex:none;display:flex;align-items:center;padding-left:7px;background:#f0f0f0;white-space:nowrap}
.mi{margin-right:10.600px}
.t{display:flex;align-items:center;gap:4px;padding:0 4px;white-space:nowrap;height:100%}
.t-new{margin-left:-6px}
.ask{width:187px;height:26px;margin:0 2px 0 3px;text-align:center;line-height:26px;color:#3a6e12;background:linear-gradient(#fafafa,#ececec);padding-right:4px}
.phone{letter-spacing:.2px}
.bell{margin-left:8px}
.arr{width:11px;height:100%;flex:none;display:flex;align-items:center;justify-content:center}
.arr::after{content:"";border:3px solid transparent;border-top:4px solid #222;border-bottom:0}
.arr-s{width:7px;margin-left:-3px}
.arr-box{background:#f4f4f4;height:22px;margin-left:0}
.more{font:12px/12px "Liberation Sans",sans-serif;color:#222}
.more-end{position:absolute;left:1353px;top:33px}

/* toolbars */
.tbar{display:flex;flex:none;align-items:stretch;background:#f0f0f0}
.grp{display:flex;align-items:center;background:linear-gradient(#fefefe,#f3f3f3);position:relative}
.sep{width:1px;height:20px;background:#aeaeae;margin:0 2px;flex:none;display:block}
.sep-wide{margin:0 3px}
.grip{width:3px;height:20px;flex:none;display:block;background:linear-gradient(#9a9a9a 2px,transparent 2px) 0 0/2px 4px}
.off{color:#9c9c9c}
.tb1{height:33px;padding-top:3px;padding-bottom:4px}
.g-file{width:150px;margin-left:2px}
.ic-a{margin-left:3px}
.ic-b{margin-left:7px}
.ic-c{margin-left:2px}
.sep-file{margin:0 5px 0 5px}
.more-file{position:absolute;left:140px;top:6px}
.g-main{width:547px;margin-left:1px}
.sigma{width:16px;text-align:center;font:bold 15px/16px "Liberation Serif",serif}
.more-main{position:absolute;left:540px;top:6px}
.g-view{margin-left:3px;padding-left:2px;width:626px}
.t-on{background:#fff;height:22px;padding:0 3px 0 3px}
.ic-w{width:20px;margin-right:-4px}
.more-end2{position:absolute;left:1353px;top:60px}

.work{flex:1;display:flex;min-height:0}

/* nav */
.nav{width:166px;flex:none;display:flex;flex-direction:column;padding-bottom:2px}
.nav-head{height:15px;flex:none;background:#0a57e0;color:#fff;display:flex;justify-content:space-between;align-items:center;font-size:13px;padding:0 3px 0 1px;letter-spacing:.2px}
.nav-btns{display:flex;gap:9px;align-items:center}
.pin{width:10px;height:10px;display:block}
.nav-btn{height:22px;margin:1px 1px 0;flex:none;border:1px solid #a8a8a8;background:#f0f0f0;text-align:center;line-height:19px;font-size:13px;letter-spacing:.5px}
.nb-first{margin-top:2px}
.nav-tree{flex:1;min-height:0;margin:1px 1px 0;border:1px solid #a0a0a0;border-width:1px 2px 2px;border-color:#b0b0b0;display:flex;flex-direction:column;background:#f0f0f0}
.tree-tools{height:26px;flex:none;display:flex;gap:7px;padding:3px 0 0 5px}
.ic-plus{width:17px;height:20px}
.tree-view{flex:1;min-height:0;display:flex;overflow:hidden;margin-left:1px;background:#fff}
.tree{flex:1;min-width:0;padding-top:1px;overflow:hidden}
.r{height:16px;display:flex;align-items:center;white-space:nowrap;font-size:12px;position:relative;
  background:linear-gradient(#888 1px,transparent 1px) 12px 0/1px 3px repeat-y}
.r span{margin-left:4px;line-height:16px;overflow:hidden}
.leaf{padding-left:42px;
  background:linear-gradient(#888 1px,transparent 1px) 12px 0/1px 3px repeat-y,
             linear-gradient(#888 1px,transparent 1px) 31px 0/1px 3px repeat-y,
             linear-gradient(90deg,#888 1px,transparent 1px) 32px 8px/3px 1px no-repeat,
             linear-gradient(90deg,#888 1px,transparent 1px) 35px 8px/3px 1px no-repeat,
             linear-gradient(90deg,#888 1px,transparent 1px) 38px 8px/3px 1px no-repeat}
.leaf.end{background:linear-gradient(#888 1px,transparent 1px) 12px 0/1px 3px repeat-y,
             linear-gradient(#888 1px,transparent 1px) 31px 0/1px 3px no-repeat,
             linear-gradient(#888 1px,transparent 1px) 31px 3px/1px 3px no-repeat,
             linear-gradient(#888 1px,transparent 1px) 31px 6px/1px 3px no-repeat,
             linear-gradient(90deg,#888 1px,transparent 1px) 32px 8px/3px 1px no-repeat,
             linear-gradient(90deg,#888 1px,transparent 1px) 35px 8px/3px 1px no-repeat,
             linear-gradient(90deg,#888 1px,transparent 1px) 38px 8px/3px 1px no-repeat}
.sel span{background:#d4d4d4}
.fold{padding-left:23px;background-color:#fff}
.fold span{margin-left:5px}
.chev{position:absolute;left:9px;top:4px;width:6px;height:6px;display:block;border:solid #555;border-width:0 2px 2px 0}
.c-r{transform:rotate(-45deg);border-color:#aaa;left:7px;top:5px}
.c-d{transform:rotate(45deg);top:2px}
.vsb{width:15px;flex:none;background:#f0f0f0;display:flex;flex-direction:column;align-items:center;position:relative;margin-right:2px}
.sb-thumb{position:absolute;left:0;width:15px;top:142px;height:223px;background:#c8c8c8}
.sb-up,.sb-dn{position:absolute;left:4px;width:7px;height:7px;border:solid #555;border-width:2px 0 0 2px;transform:rotate(45deg);top:7px}
.sb-dn{top:auto;bottom:6px;transform:rotate(225deg)}
.hsb{height:16px;flex:none;background:#f0f0f0;display:flex;align-items:center;position:relative;margin:0 1px}
.hsb-thumb{position:absolute;left:19px;width:102px;top:1px;height:14px;background:#c8c8c8}
.sb-l,.sb-r{position:absolute;width:7px;height:7px;border:solid #555;border-width:2px 0 0 2px;transform:rotate(-45deg);left:9px;top:4px}
.sb-r{left:auto;right:12px;transform:rotate(135deg)}

/* main */
.main{flex:1;min-width:0;margin-left:1px;display:flex;flex-direction:column}
.tb2{height:26px}
.g-edit{margin-left:2px;padding-left:2px;width:788px;height:26px}
.g-edit .t{margin-right:-.45px}
.g-edit .arr-s{width:10px}
.tb3{height:28px;padding:2px 0 0 9px}
.tb3 .grp{height:24px}
.g-sel{width:632px}
.g-sel .t{margin-right:-1px}
.dd{height:24px;width:69px;background:#fff;margin-right:3px;display:flex;align-items:center;padding-left:2px;position:relative;flex:none;white-space:nowrap}
.dd::after{content:"";position:absolute;right:3px;top:11px;border:3px solid transparent;border-top:4px solid #222;border-bottom:0}
.dd-s{width:57px}
.dd-e{width:56px;margin:0 -2px 0 3px}
.g-sel .sep{margin:0 2px}
.g-axis{width:422px;padding-left:4px}
.g-axis .t{margin-right:-.8px}
.tb4{height:28px;padding-top:4px}
.g-draw{margin-left:9px;width:1151px;height:24px}
.g-draw .arr-s{width:10px}
.t-pick{background:#d9e9f6;border:1px solid #3a8ed0;height:23px;width:50px;padding:0 4px 0 5px;gap:7px}
.t-pick .ic{width:10px}
.more-draw{position:absolute;left:1138px;top:6px}
.g-tail{width:33px;margin-left:4px;justify-content:flex-start;background:#f4f4f4;padding-left:5px}
.cad{display:block;width:1199px;height:245px;flex:none;margin-top:2px}
.cad-t{font-family:"Liberation Sans",sans-serif}
.cad-a{font-size:15.500px;fill:#d8d8d8}
.cad-b{font-size:15px;fill:#7a7a98}
.cad-c{font-size:17px;fill:#d8d8d8;text-anchor:middle}
.cad-d{font-size:14px;fill:#b060a8;text-anchor:middle}
.cad-s{font-size:8px;fill:#8a8a9a}
.cad-m{font-size:6px;fill:#85858a}

/* snap */
.snap{height:28px}
.g-snap{padding-left:1px;height:27px;margin-top:1px;width:474px}
.g-snap .t{height:23px}
.g-snap>.grip{margin-right:3px}
.t-box{border:1px solid #2f8fd8;background:#dceafa;margin-right:-1px;padding:0 3px;gap:4px}
.t-tight{margin-left:-2px}
.g-snap>.grip-m{margin:0 0 0 5px}
.g-off{margin-top:1px;margin-left:11px;background:transparent;height:27px}
.dd-o{width:58px;height:25px;margin-right:3px}
.g-off .lab{color:#666}
.g-off .off{margin-left:1px;color:#9c9c9c}
.lab{margin:0 2.500px;white-space:nowrap}
.g-off .lab-m{margin-right:4.500px}
.num{height:22px;width:58px;background:#fff;border:1px solid #808080;text-align:right;padding-right:21px;line-height:20px;position:relative;flex:none}
.num::after{content:"▴\A▾";white-space:pre;position:absolute;right:0;top:0;bottom:0;width:13px;border-left:1px solid #ccc;background:#f4f4f4;font:8px/10px "DejaVu Sans",sans-serif;color:#333;text-align:center}
.num-y{width:55px}
.num-r{width:68px}
.chk{width:11px;height:11px;border:1px solid #777;background:#fff;margin:0 5px 0 1px;display:block;flex:none}
.g-off .lab-r{margin:0 3px 0 3px;color:#1a1a1a}

/* panel */
.panel{flex:1;min-height:0;display:flex;margin-top:6px;padding-bottom:2px}
.pgrip{width:13px;flex:none;position:relative}
.pgrip::after{content:"";position:absolute;left:3px;width:8px;top:17px;bottom:0;background:linear-gradient(90deg,#f0f0f0 2px,transparent 2px) 0 0/4px 4px,linear-gradient(#f0f0f0 2px,#b4b4b4 2px) 0 0/4px 4px}
.pclose{position:absolute;left:1px;top:1px;width:9px;height:9px}
.pbody{flex:1;min-width:0;display:flex;flex-direction:column}
.ptools{height:26px;flex:none;display:flex;align-items:center;background:linear-gradient(#fcfcfc,#efefef)}
.ptools .t{padding:0 5px 0 4px;gap:4px}
.ptools .t:nth-child(2){margin-left:-2px}
.ptools .t:nth-child(n+3){padding:0 5px}
.ptools .t:nth-child(3){margin-left:-1px}
.gridwrap{flex:1;min-height:0;background:#fff;border:solid #b8b8b8;border-width:2px 2px 2px 1px;display:flex;flex-direction:column;margin:0 2px 0 -1px}
.gridview{flex:1;min-height:0;overflow:hidden;background:#fff}
.grid{table-layout:fixed;border-collapse:collapse;width:1184px}
.c0{width:30px}.c1{width:42px}.c2{width:81px}.c3{width:81px}.c4{width:100px}.c5{width:72px}.c6{width:229px}.c7{width:41px}.c8{width:80px}.c9{width:81px}.c10{width:81px}.c11{width:81px}.c12{width:82px}.c13{width:41px}.c14{width:41px}.c15{width:21px}
.grid th{font-weight:400;height:19px;padding:0;border:1px solid #c4c4c4;background:linear-gradient(#fff,#f2f2f2);overflow:hidden;white-space:nowrap;text-align:center;position:relative}
.grid td{height:19px;padding:0 0 0 2px;border:1px solid #c0c0c0;background:#a6c9ef;overflow:hidden;white-space:nowrap;position:relative;line-height:14px}
.grid td em{line-height:14px}
.grid th.clip-l{text-align:left;text-indent:-6px}
.grid th.clip-r{text-align:left;padding-left:15px}
.grid th.hot{background:linear-gradient(#fbdca0,#f2c060);color:#5f1070}
.grid td.rowh{background:#fbd490;text-align:center;color:#70106a;font-family:"Liberation Mono",monospace;font-size:10px}
.grid td.mark{box-shadow:inset 2px 0 0 #222}
.grid td.cur{background:#96c2f2;box-shadow:inset 0 0 0 3px #808080;overflow:visible;padding-left:3px}
.handle{position:absolute;right:-3px;bottom:-3px;width:5px;height:5px;background:#808080;border:1px solid #fff;display:block}
.ghs{height:16px;flex:none;background:#f0f0f0;position:relative;margin-top:auto}
.ghs .sb-l{left:6px;top:4px}
.ghs .sb-r{right:7px;top:4px}
.ghs-track{position:absolute;left:0;right:0;top:0;bottom:0}
.ghs-thumb{position:absolute;left:636px;width:439px;top:0;height:16px;background:#c8c8c8}

/* status */
.status{height:21px;flex:none;display:flex;padding-top:1px;gap:2px;background:#f0f0f0}
.st{height:20px;background:linear-gradient(#fff,#f6f6f6);border:1px solid #dcdcdc;line-height:17px;padding-left:1px;white-space:nowrap;overflow:hidden;font-size:12px}
.st em{font-size:10.500px}
.st-0{width:148px}.st-1{width:78px;padding-left:2px}.st-2{width:98px;padding-left:2px}.st-3{width:48px;padding-left:2px}.st-4{width:915px;padding-left:2px}.st-5{flex:1}

/* taskbar */
.taskbar{height:40px;flex:none;background:#05141e;display:flex;align-items:center;color:#fff;position:relative}
.tk-start{width:48px;height:40px;background:#000;display:flex;align-items:center;justify-content:center}
.tk-search{width:344px;height:40px;background:#383838;display:flex;align-items:center;color:#9a9a9a;font-size:14px;position:relative;padding-left:12px}
.cortana{width:18px;height:18px;border:3px solid #d8d8d8;border-radius:50%;margin-right:6px;flex:none;display:block}
.tk-mic{position:absolute;left:315px;top:12px;color:#9a9a9a}
.tk{width:45px;height:40px;flex:none;display:flex;align-items:center;justify-content:center;position:relative}
.w46{width:46px}.w58{width:58px}.w42{width:42px}.w27{width:27px}
.tk-i{width:22px;height:22px;display:block}
.tk-bell{position:absolute;left:20px;top:6px;width:14px;height:14px;filter:hue-rotate(180deg) saturate(2)}
.tk-sep{width:1px;height:18px;background:#555;display:block}
.on::after{content:"";position:absolute;left:5px;right:4px;bottom:0;height:3px;background:#76b9ed}
.cur-t{background:#333c42}
.cur-t::after{left:0;right:0}
.tk-e{font:bold 32px/32px "Liberation Sans",sans-serif;color:#1a90e8}
.tk-ie{color:#4aa8e8;text-shadow:2px 0 0 #e0c040}
.tk-ge{width:22px;height:26px;border-radius:50%;background:#7ac840;border:2px solid #e4f4d0;font:bold 18px/22px "Liberation Sans",sans-serif;color:#fff;text-align:center}
.tk-q{position:relative;display:block;width:20px;height:22px}
.tk-q b{position:absolute;left:9px;top:-2px;font:bold 18px/18px "Liberation Sans",sans-serif;color:#f0d020}
.tk-q .ic{margin-top:6px;width:12px}
.cpu{width:60px;margin-left:16px;display:flex;flex-direction:column;align-items:center;font-size:12.500px;line-height:18px;white-space:nowrap}
.tr{height:40px;flex:none;display:flex;align-items:center;justify-content:center}
.tr-first{margin-left:7px}
.w24{width:24px}.w26{width:26px}.w20{width:20px}.w36{width:36px}.w34{width:34px}
.caret{width:9px;height:9px;border:solid #fff;border-width:1.500px 0 0 1.500px;transform:rotate(45deg);display:block;margin-top:5px}
.tr-k{width:24px;height:16px}
.zh{font-size:15px}
.sg{width:25px;height:23px;background:#f0561e;color:#fff;display:block;border-radius:4px 6px 5px 5px;font:italic bold 21px/23px "Liberation Sans",sans-serif;text-align:center;transform:rotate(-5deg)}
.sg-s{width:15px;height:19px;font-size:15px;line-height:19px;border-radius:3px}
.clock{width:61px;margin-left:-6px;display:flex;flex-direction:column;align-items:center;font-size:13px;line-height:18px;white-space:nowrap}
.notif{flex:1;position:relative;display:flex;align-items:center;justify-content:flex-end;padding-right:24px;height:40px;background:#02080c}
.notif .tk-i{width:18px;height:18px;margin-top:-6px}
.notif b{position:absolute;left:39px;top:19px;width:17px;height:17px;border-radius:50%;background:#3a3a3a;border:1px solid #111;font:bold 12px/15px "Liberation Sans",sans-serif;text-align:center;color:#fff}

/* floating */
.ime{position:absolute;left:133px;top:3px;width:182px;height:23px;background:#f4f8fd;border:1px solid #d8e2ee;display:flex;align-items:center}
.ime .sg{margin:2px 0 0 0;flex:none}
.ime-en{position:absolute;left:31px;top:2px;font-size:15px;line-height:19px;font-weight:700;color:#2a6fb8}
.ime-dot{position:absolute;left:56px;top:1px;font:bold 12px/16px "Liberation Sans",sans-serif;color:#2a6fb8}
.ime-i{position:absolute;width:16px;height:16px;top:3px;color:#2c80c8}
.ime-i:nth-of-type(1){left:75px}
.ime-i:nth-of-type(2){left:96px}
.ime-i:nth-of-type(3){left:120px}
.ime-i:nth-of-type(4){left:141px}
.ime-i:nth-of-type(5){left:162px}
.badge{position:absolute;left:1138px;top:-30px;width:48px;height:50px;border-radius:50%;background:linear-gradient(#3fb85a,#58c46c);border:2px solid #eef2ee;box-shadow:0 1px 3px rgba(0,0,0,.5);color:#fff;text-align:center}
.badge span{position:absolute;left:0;right:0;bottom:2px;font:bold 13px/16px "Liberation Sans",sans-serif}
.ring{position:absolute;left:822px;top:433px;width:210px;height:148px;pointer-events:none}
```
